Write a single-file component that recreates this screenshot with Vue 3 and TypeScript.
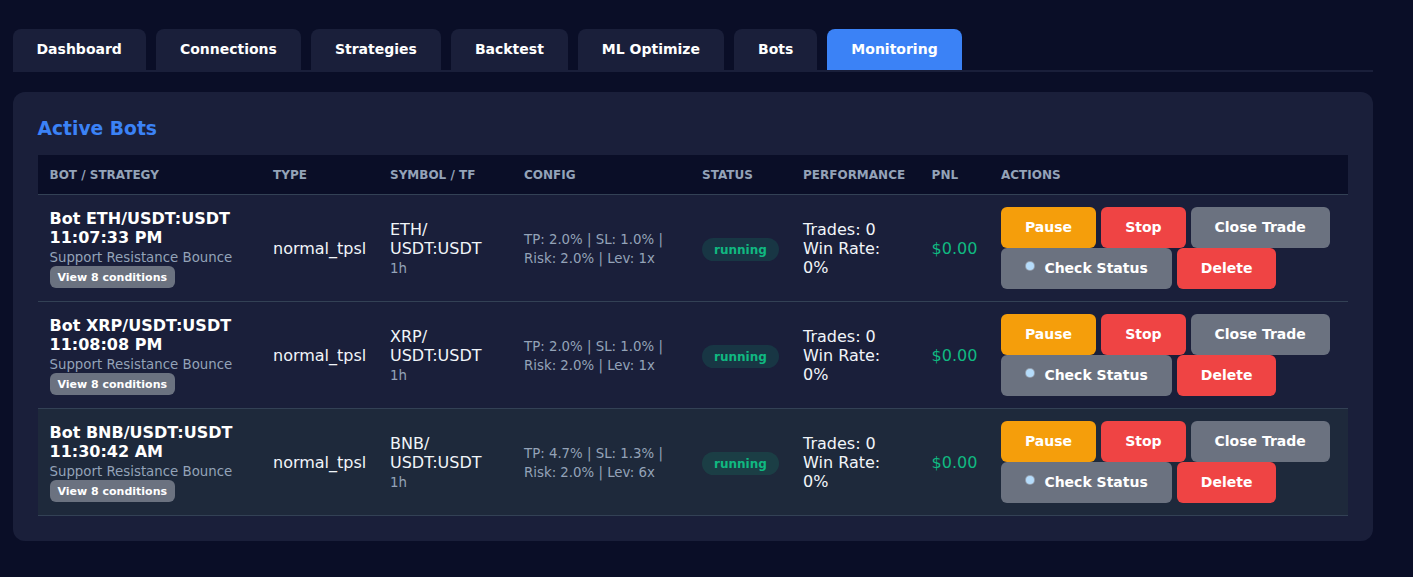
<template>
  <div class="page">
    <nav class="tabs">
      <button v-for="tab in tabs" :key="tab" class="tab" :class="{ active: tab === 'Monitoring' }">{{ tab }}</button>
    </nav>

    <section class="panel">
      <h3 class="panel-title">Active Bots</h3>
      <table class="bots">
        <colgroup>
          <col v-for="(w, i) in colWidths" :key="i" :style="{ width: w + 'px' }" />
        </colgroup>
        <thead>
          <tr>
            <th v-for="h in headers" :key="h">{{ h }}</th>
          </tr>
        </thead>
        <tbody>
          <tr v-for="bot in bots" :key="bot.base" :class="{ hovered: bot.hovered }">
            <td>
              <strong class="bot-name">Bot {{ bot.base }}/USDT:USDT {{ bot.time }}</strong><br />
              <small class="muted">Support Resistance Bounce</small>
              <button class="cond-btn">View 8 conditions</button>
            </td>
            <td>normal_tpsl</td>
            <td>
              {{ bot.base }}/<wbr />USDT:USDT<br />
              <small class="muted">1h</small>
            </td>
            <td>
              <small class="muted">TP: {{ bot.tp }}% | SL: {{ bot.sl }}% | Risk: 2.0% | Lev: {{ bot.lev }}x</small>
            </td>
            <td><span class="badge">running</span></td>
            <td>Trades: 0<br />Win Rate: 0%</td>
            <td class="pnl">$0.00</td>
            <td>
              <button class="btn amber">Pause</button>
              <button class="btn red">Stop</button>
              <button class="btn grey">Close Trade</button>
              <button class="btn grey"><span class="dot"></span>Check Status</button>
              <button class="btn red">Delete</button>
            </td>
          </tr>
        </tbody>
      </table>
    </section>
  </div>
</template>

<script setup lang="ts">
interface Bot {
  base: string;
  time: string;
  tp: string;
  sl: string;
  lev: number;
  hovered?: boolean;
}

const tabs = ["Dashboard", "Connections", "Strategies", "Backtest", "ML Optimize", "Bots", "Monitoring"];
const headers = ["Bot / Strategy", "Type", "Symbol / TF", "Config", "Status", "Performance", "PnL", "Actions"];
const colWidths = [223.5, 117, 134, 178, 101, 128.6, 69.4, 358.5];

const bots: Bot[] = [
  { base: "ETH", time: "11:07:33 PM", tp: "2.0", sl: "1.0", lev: 1 },
  { base: "XRP", time: "11:08:08 PM", tp: "2.0", sl: "1.0", lev: 1 },
  { base: "BNB", time: "11:30:42 AM", tp: "4.7", sl: "1.3", lev: 6, hovered: true },
];
</script>

<style>
html,
body {
  margin: 0;
  background: #0a0e27;
}
</style>

<style scoped>
.page {
  width: 1360px;
  padding: 29px 0 36px 12.5px;
  font-family: "DejaVu Sans", sans-serif;
  color: #f1f5f9;
}

.tabs {
  display: flex;
  gap: 10px;
  border-bottom: 2px solid #1a1f3a;
  margin-bottom: 20px;
}

.tab {
  padding: 12px 24px 13px;
  border: none;
  border-radius: 8px 8px 0 0;
  background: #1a1f3a;
  color: #fff;
  font-family: inherit;
  font-size: 14px;
  font-weight: 600;
}

.tab.active {
  background: #3b82f6;
}

.panel {
  background: #1a1f3a;
  border-radius: 12px;
  padding: 26px 25px 25px;
}

.panel-title {
  margin: 0 0 16px;
  color: #3b82f6;
  font-size: 18.72px;
  font-weight: 600;
}

.bots {
  width: 100%;
  table-layout: fixed;
  border-collapse: collapse;
  font-size: 16px;
}

th {
  padding: 13px 12px 12px;
  background: #0a0e27;
  border-bottom: 1px solid #334155;
  color: #94a3b8;
  font-size: 12px;
  font-weight: 600;
  text-align: left;
  text-transform: uppercase;
}

td {
  padding: 12px;
  border-bottom: 1px solid #334155;
  vertical-align: middle;
}

.hovered td {
  background: #1e293b;
}

.bot-name {
  color: #fff;
  font-weight: 600;
}

.muted {
  color: #94a3b8;
  font-size: 13.33px;
}

.cond-btn {
  display: block;
  padding: 5px 8px 4px;
  border: none;
  border-radius: 6px;
  background: #6b7280;
  color: #fff;
  font-family: inherit;
  font-size: 11px;
  font-weight: 600;
}

.badge {
  padding: 4.8px 12px;
  border-radius: 12px;
  background: rgba(16, 185, 129, 0.15);
  color: #10b981;
  font-size: 12px;
  font-weight: 600;
}

.pnl {
  color: #10b981;
}

.btn {
  margin-right: 5px;
  padding: 12px 24px 13px;
  border: none;
  border-radius: 6px;
  color: #fff;
  font-family: inherit;
  font-size: 14px;
  font-weight: 600;
}

.amber {
  background: #f59e0b;
}

.red {
  background: #ef4444;
}

.grey {
  background: #6b7280;
}

.dot {
  display: inline-block;
  width: 8px;
  height: 8px;
  margin: 0 9.9px 3px 1.5px;
  border-radius: 50%;
  background: #b5dcfb;
  box-shadow: 0 0 0 1px rgba(200, 215, 230, 0.45);
}
</style>
